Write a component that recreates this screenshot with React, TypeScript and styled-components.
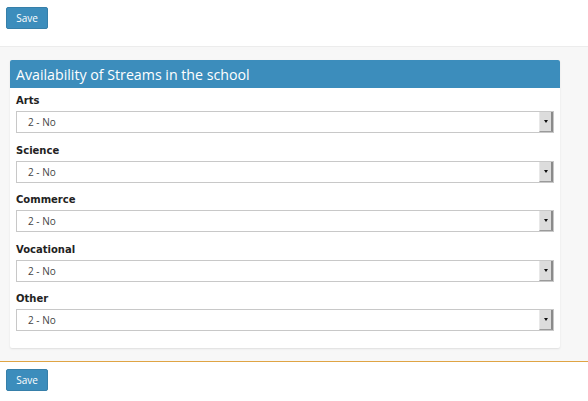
import React from "react";
import styled, { createGlobalStyle } from "styled-components";

const Global = createGlobalStyle`
  html, body { margin: 0; padding: 0; background: #fff; }
  body { font-family: "Open Sans", "Noto Sans", sans-serif; color: #333; }
  * { box-sizing: border-box; }
`;

const Page = styled.div`
  width: 588px;
  height: 401px;
  display: flex;
  flex-direction: column;
  background: #fff;
  overflow: hidden;
`;

const Bar = styled.div<{ $bottom?: boolean }>`
  display: flex;
  align-items: flex-start;
  padding: 7px 6px;
  background: #fff;
  height: ${(p) => (p.$bottom ? "auto" : "47px")};
  border-top: ${(p) => (p.$bottom ? "1px solid #dfa444" : "none")};
  border-bottom: ${(p) => (p.$bottom ? "none" : "1px solid #ececec")};
  flex-shrink: 0;
`;

const SaveButton = styled.button`
  width: 42px;
  height: 22px;
  padding: 0;
  background: #3c8dbc;
  border: 1px solid #367fa9;
  border-radius: 2px;
  color: #fff;
  font-family: "Open Sans", "Noto Sans", sans-serif;
  font-size: 10px;
  cursor: pointer;
`;

const Content = styled.div`
  background: #f7f7f7;
  padding: 13px 28px 13px 10px;
  flex-shrink: 0;
`;

const Panel = styled.section`
  width: 550px;
  background: #fff;
  border-radius: 2px;
  box-shadow: 0 1px 2px rgba(0, 0, 0, 0.1);
`;

const PanelHeader = styled.h3`
  margin: 0;
  height: 28px;
  display: flex;
  align-items: center;
  padding: 0 6px;
  background: #3c8dbc;
  color: #fff;
  font-family: "Open Sans", "Noto Sans", sans-serif;
  font-weight: 400;
  font-size: 14.2px;
  border-radius: 2px 2px 0 0;
`;

const PanelBody = styled.div`
  padding: 5px 6px 17px;
  display: flex;
  flex-direction: column;
  gap: 9.5px;
`;

const Field = styled.div`
  display: flex;
  flex-direction: column;
`;

const Label = styled.label`
  height: 16px;
  line-height: 16px;
  font-family: "DejaVu Sans", "Open Sans", sans-serif;
  font-weight: 700;
  font-size: 10px;
  color: #222;
  margin-bottom: 2px;
`;

const Select = styled.div`
  position: relative;
  height: 22px;
  border: 1px solid #c8c8c8;
  display: flex;
  align-items: center;
  padding-left: 11px;
  font-family: "Open Sans", "Noto Sans", sans-serif;
  font-size: 10px;
  color: #444;
  background: #fff;
`;

const Arrow = styled.span`
  position: absolute;
  right: 0;
  top: 0;
  bottom: 0;
  width: 14px;
  background: #dcdcdc;
  border-right: 2px solid #8a8a8a;
  border-bottom: 1px solid #9a9a9a;
  border-left: 1px solid #e8e8e8;
  display: flex;
  align-items: center;
  justify-content: center;
  &::after {
    content: "";
    width: 0;
    height: 0;
    border-left: 2.5px solid transparent;
    border-right: 2.5px solid transparent;
    border-top: 3px solid #111;
  }
`;

const fields = ["Arts", "Science", "Commerce", "Vocational", "Other"];

export default function App() {
  return (
    <Page>
      <Global />
      <Bar>
        <SaveButton>Save</SaveButton>
      </Bar>
      <Content>
        <Panel>
          <PanelHeader>Availability of Streams in the school</PanelHeader>
          <PanelBody>
            {fields.map((f) => (
              <Field key={f}>
                <Label>{f}</Label>
                <Select>
                  2 - No
                  <Arrow />
                </Select>
              </Field>
            ))}
          </PanelBody>
        </Panel>
      </Content>
      <Bar $bottom>
        <SaveButton>Save</SaveButton>
      </Bar>
    </Page>
  );
}
